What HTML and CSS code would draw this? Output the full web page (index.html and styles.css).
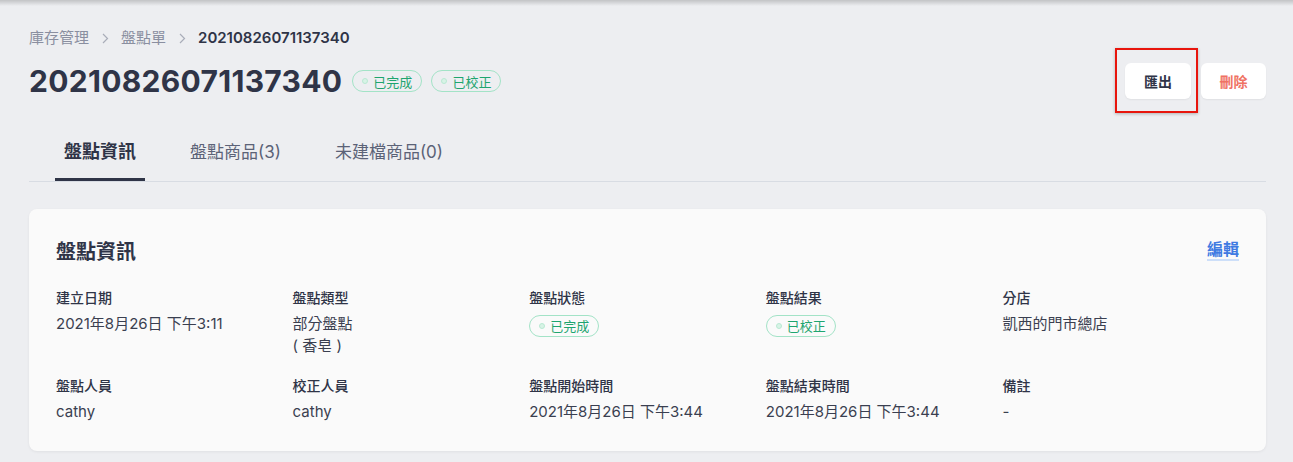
FILE: index.html
```html
<!DOCTYPE html>
<html>

<head>
    <title>盤點單</title>
    <link rel="stylesheet" href="styles.css">
</head>

<body>
    <div class="top-shadow"></div>
    <div class="page">
        <div class="page-header">
            <div class="header-left">
                <div class="breadcrumb">
                    <span class="crumb">庫存管理</span>
                    <svg class="sep" width="7" height="11" viewBox="0 0 7 11"><path d="M1 1l4.5 4.5L1 10" fill="none" stroke="#a9adb9" stroke-width="1.2"/></svg>
                    <span class="crumb">盤點單</span>
                    <svg class="sep" width="7" height="11" viewBox="0 0 7 11"><path d="M1 1l4.5 4.5L1 10" fill="none" stroke="#a9adb9" stroke-width="1.2"/></svg>
                    <span class="crumb current">20210826071137340</span>
                </div>
                <div class="title-row">
                    <h1>20210826071137340</h1>
                    <span class="badge"><i class="dot"></i>已完成</span>
                    <span class="badge"><i class="dot"></i>已校正</span>
                </div>
            </div>
            <div class="actions">
                <div class="highlight-wrap">
                    <button class="btn">匯出</button>
                    <span class="highlight"></span>
                </div>
                <button class="btn danger">刪除</button>
            </div>
        </div>

        <div class="tabs">
            <div class="tab active">盤點資訊</div>
            <div class="tab">盤點商品(3)</div>
            <div class="tab">未建檔商品(0)</div>
        </div>

        <div class="card">
            <div class="card-head">
                <h2>盤點資訊</h2>
                <a class="edit">編輯</a>
            </div>
            <div class="info-grid">
                <div class="field">
                    <div class="label">建立日期</div>
                    <div class="value">2021年8月26日 下午3:11</div>
                </div>
                <div class="field">
                    <div class="label">盤點類型</div>
                    <div class="value">部分盤點<br>( 香皂 )</div>
                </div>
                <div class="field">
                    <div class="label">盤點狀態</div>
                    <div class="value"><span class="badge small"><i class="dot"></i>已完成</span></div>
                </div>
                <div class="field">
                    <div class="label">盤點結果</div>
                    <div class="value"><span class="badge small"><i class="dot"></i>已校正</span></div>
                </div>
                <div class="field">
                    <div class="label">分店</div>
                    <div class="value">凱西的門市總店</div>
                </div>
                <div class="field">
                    <div class="label">盤點人員</div>
                    <div class="value">cathy</div>
                </div>
                <div class="field">
                    <div class="label">校正人員</div>
                    <div class="value">cathy</div>
                </div>
                <div class="field">
                    <div class="label">盤點開始時間</div>
                    <div class="value">2021年8月26日 下午3:44</div>
                </div>
                <div class="field">
                    <div class="label">盤點結束時間</div>
                    <div class="value">2021年8月26日 下午3:44</div>
                </div>
                <div class="field">
                    <div class="label">備註</div>
                    <div class="value">-</div>
                </div>
            </div>
        </div>
    </div>
</body>
</html>
```

FILE: styles.css
```css
body {
    margin: 0;
    background-color: #edeef1;
    font-family: Inter, "Noto Sans CJK TC", sans-serif;
    color: #2f3447;
    height: 100vh;
    overflow: hidden;
}

.top-shadow {
    height: 6px;
    background: linear-gradient(to bottom, rgba(0, 0, 0, 0.18), rgba(0, 0, 0, 0));
    margin-bottom: -6px;
}

.page {
    padding: 28px 27px 0 29px;
}

.page-header {
    display: flex;
    justify-content: space-between;
    align-items: flex-end;
}

.breadcrumb {
    display: flex;
    align-items: center;
    font-size: 15px;
    line-height: 20px;
    color: #8a8fa0;
}

.breadcrumb .sep {
    margin: 0 12px 0 13px;
}

.breadcrumb .current {
    color: #2f3447;
    font-weight: 600;
}

.title-row {
    display: flex;
    align-items: center;
    margin-top: 15px;
    height: 36px;
}

h1 {
    margin: 0 10px 0 0;
    font-size: 30px;
    font-weight: 700;
    letter-spacing: 0.3px;
    color: #2f3447;
}

.badge {
    display: inline-flex;
    align-items: center;
    height: 20px;
    padding: 0 9px;
    border: 1px solid #a3e3c7;
    border-radius: 11px;
    color: #1ea56f;
    font-size: 13px;
    margin-right: 9px;
}

.badge .dot {
    width: 4px;
    height: 4px;
    border-radius: 50%;
    border: 1px solid #b9e9d3;
    background: #d8f3e6;
    margin-right: 5px;
}

.badge.small {
    margin-right: 0;
}

.actions {
    display: flex;
    gap: 10px;
}

.highlight-wrap {
    position: relative;
}

.highlight {
    position: absolute;
    left: -10px;
    right: -7px;
    top: -15px;
    bottom: -14px;
    border: 2px solid #e8150d;
    box-shadow: 0 1px 3px rgba(0, 0, 0, 0.25);
}

.btn {
    height: 36px;
    padding: 0 18px;
    min-width: 66px;
    border: none;
    border-radius: 6px;
    background: #fff;
    box-shadow: 0 1px 2px rgba(0, 0, 0, 0.06);
    font-family: Inter, "Noto Sans CJK TC", sans-serif;
    font-size: 14px;
    font-weight: 600;
    color: #2f3447;
}

.btn.danger {
    color: #ef7263;
    min-width: 65px;
}

.tabs {
    display: flex;
    gap: 36px;
    margin-top: 41px;
    padding-left: 26px;
    border-bottom: 1px solid #d8dce3;
}

.tab {
    padding: 0 9px 14px;
    font-size: 17px;
    line-height: 24px;
    color: #5b6277;
    border-bottom: 3px solid transparent;
}

.tab.active {
    font-size: 18px;
    font-weight: 700;
    color: #2f3447;
    border-bottom-color: #2f3447;
}

.card {
    margin-top: 27px;
    background: #fafafa;
    border-radius: 8px;
    box-shadow: 0 1px 3px rgba(0, 0, 0, 0.06);
    padding: 27px 27px 28px 27px;
}

.card-head {
    display: flex;
    justify-content: space-between;
    align-items: center;
    height: 28px;
}

h2 {
    margin: 0;
    font-size: 20px;
    font-weight: 700;
    color: #2f3447;
}

.edit {
    color: #3f7be2;
    font-size: 16px;
    font-weight: 600;
    border-bottom: 2px solid #cddff9;
    line-height: 20px;
}

.info-grid {
    display: grid;
    grid-template-columns: repeat(5, 1fr);
    row-gap: 18px;
    margin-top: 23px;
}

.label {
    font-size: 14px;
    line-height: 22px;
    font-weight: 500;
    color: #2f3447;
}

.value {
    margin-top: 4px;
    font-size: 15px;
    line-height: 22px;
    color: #3a3f50;
}
```
